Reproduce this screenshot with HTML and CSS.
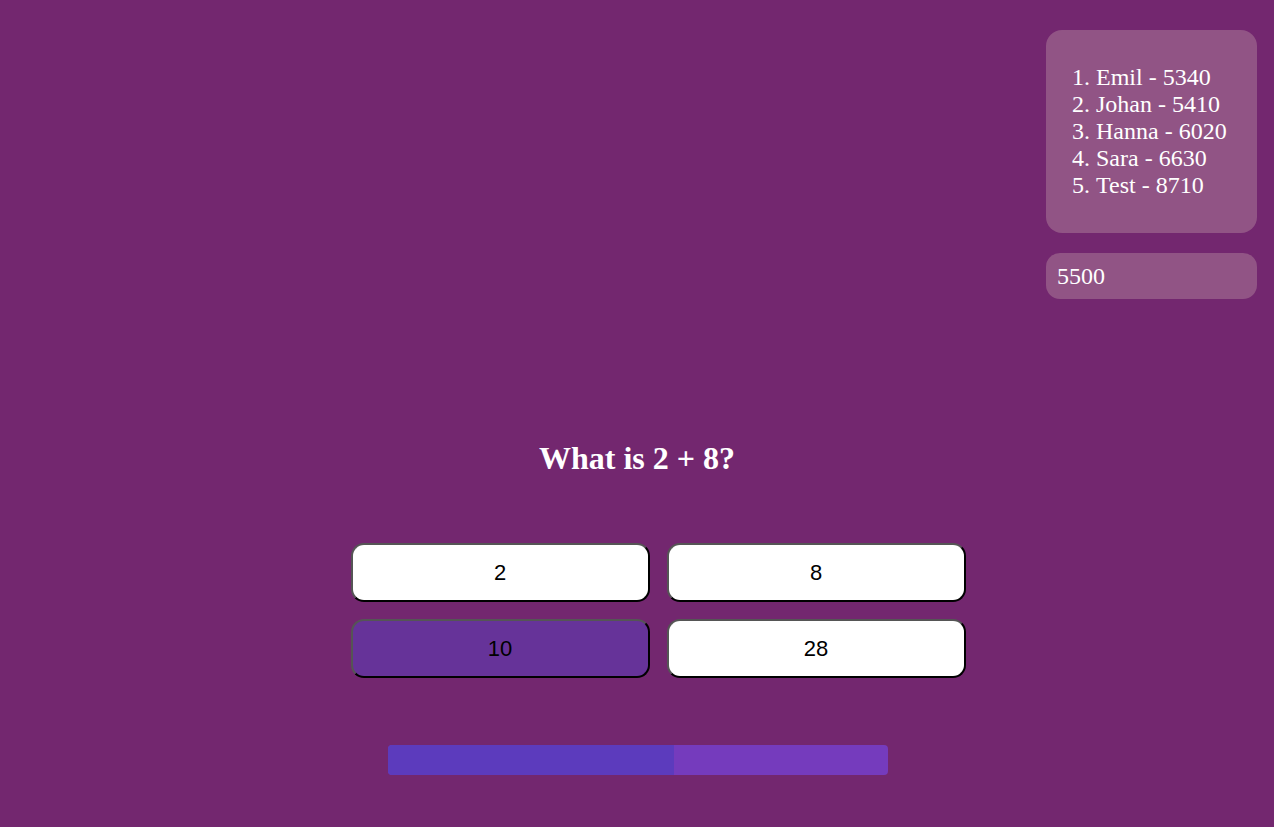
FILE: index.html
```html
<!DOCTYPE html>
<html>
<head>
<meta charset="utf-8">
<link rel="stylesheet" href="styles.css">
</head>
<body>
<div class="page">
  <main class="game">
    <h1 class="question">What is 2 + 8?</h1>
    <div class="answers-wrap">
      <div class="answers">
        <button class="answer">2</button>
        <button class="answer">8</button>
        <button class="answer selected">10</button>
        <button class="answer">28</button>
      </div>
    </div>
    <div class="timer">
      <div class="timer-fill" style="width: 57.2%"></div>
    </div>
  </main>
  <aside class="side">
    <div class="leaderboard">
      <ol class="scores">
        <li>Emil - 5340</li>
        <li>Johan - 5410</li>
        <li>Hanna - 6020</li>
        <li>Sara - 6630</li>
        <li>Test - 8710</li>
      </ol>
    </div>
    <div class="score">5500</div>
  </aside>
</div>
</body>
</html>
```

FILE: styles.css
```css
html, body {
  margin: 0;
  padding: 0;
}
body {
  background: #73276f;
  width: 1274px;
  height: 827px;
  overflow: hidden;
  font-family: "Liberation Serif", "Times New Roman", serif;
  color: #fff;
}
.page {
  display: grid;
  grid-template-areas: "stack";
  width: 1274px;
  height: 827px;
}
.game {
  grid-area: stack;
  display: flex;
  flex-direction: column;
  align-items: center;
  padding-top: 440px;
}
.question {
  margin: 0;
  font-size: 32px;
  line-height: 36px;
  font-weight: bold;
  color: #fff;
}
.answers-wrap {
  align-self: stretch;
  display: flex;
  justify-content: center;
  padding-left: 42px;
  margin-top: 67px;
}
.answers {
  display: grid;
  grid-template-columns: 299px 299px;
  column-gap: 17px;
  row-gap: 17px;
}
.answer {
  height: 59px;
  margin: 0;
  padding: 0;
  background: #fff;
  border: 2px solid;
  border-color: #555 #000 #000 #555;
  border-radius: 13px;
  font-family: "Liberation Sans", Arial, sans-serif;
  font-size: 22px;
  color: #000;
}
.answer.selected {
  background: #663399;
}
.timer {
  margin: 67px 0 0 2px;
  width: 500px;
  height: 30px;
  background: #753bbd;
  border-radius: 4px;
  overflow: hidden;
  display: flex;
}
.timer-fill {
  height: 100%;
  background: #5c3bbd;
}
.side {
  grid-area: stack;
  justify-self: end;
  align-self: start;
  width: 211px;
  margin: 30px 17px 0 0;
  display: flex;
  flex-direction: column;
  gap: 20px;
}
.leaderboard {
  background: #915485;
  border-radius: 16px;
  padding: 10px;
}
.scores {
  margin: 24px 0;
  padding-left: 40px;
  font-size: 24px;
  line-height: 27px;
}
.score {
  background: #915485;
  border-radius: 14px;
  padding: 10px 11px;
  font-size: 24px;
  line-height: 26px;
}
```
